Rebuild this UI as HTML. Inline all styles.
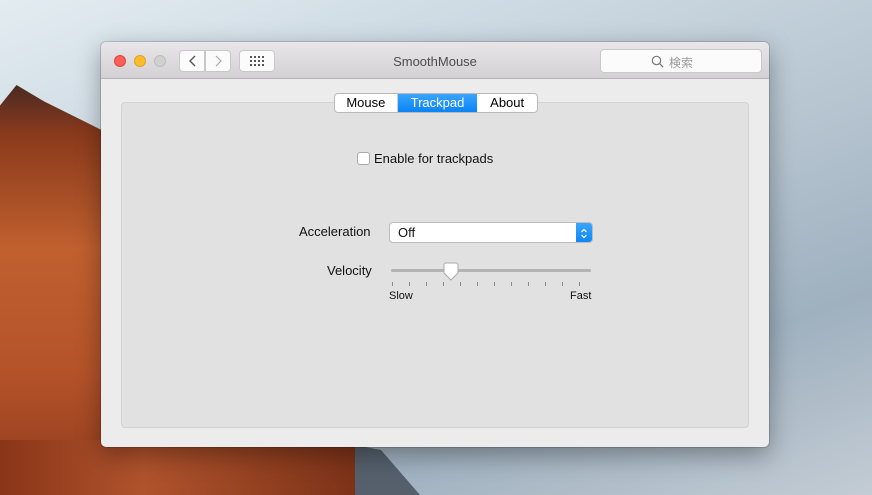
<!DOCTYPE html>
<html><head><meta charset="utf-8"><style>
*{margin:0;padding:0;box-sizing:border-box}
html,body{width:872px;height:495px;overflow:hidden}
body{position:relative;font-family:"Liberation Sans","Noto Sans CJK JP",sans-serif;font-size:13px;
background:linear-gradient(160deg,#e3ecf1 0%,#ccd9e2 25%,#b2c1cd 55%,#9fb0bf 75%,#c3ccd4 100%)}
.a{position:absolute}
.cliff{left:0;top:85px;width:110px;height:410px;background:linear-gradient(180deg,#4a2a22 0%,#8a3a1c 12%,#c0602f 40%,#b4532a 70%,#8f3a1b 100%);clip-path:polygon(0 5%,15% 0,40% 4%,70% 8%,100% 12%,100% 100%,0 100%)}
.cliff2{left:0;top:440px;width:358px;height:55px;background:linear-gradient(90deg,#8a3518,#b0532c 40%,#7c3218 100%)}
.rock{left:355px;top:445px;width:65px;height:50px;background:#55606c;clip-path:polygon(0 0,40% 10%,100% 100%,0 100%)}
.win{left:101px;top:42px;width:668px;height:405px;background:#ececec;border-radius:5px;box-shadow:0 8px 25px rgba(0,0,0,.35),0 0 0 1px rgba(0,0,0,.15);overflow:hidden}
.tb{left:0;top:0;width:668px;height:37px;background:linear-gradient(#e8e6e8,#d3d1d3);border-bottom:1px solid #b5b3b5}
.dot{top:13px;width:12px;height:12px;border-radius:50%}
.btn{background:#fbfbfb;border:1px solid #c8c8c8;border-radius:4px}
.box{left:20px;top:60px;width:628px;height:326px;background:#e1e1e1;border:1px solid #d3d3d3;border-radius:4px}
.tabs{left:233px;top:51px;height:20px;width:204px;border:1px solid #b9b9b9;border-radius:4px;background:#fff;display:flex;overflow:hidden;font-size:13px;line-height:18px}
.tabs div{text-align:center}
</style></head><body>
<div class="a cliff"></div><div class="a cliff2"></div><div class="a rock"></div>
<div class="a win">
 <div class="a tb"></div>
 <div class="a dot" style="left:13px;background:#fc5f57;border:1px solid #e0443e"></div>
 <div class="a dot" style="left:33px;background:#fdbc2e;border:1px solid #dea123"></div>
 <div class="a dot" style="left:53px;background:#d0d0d0;border:1px solid #bdbdbd"></div>
 <div class="a btn" style="left:78px;top:8px;width:26px;height:22px;border-radius:4px 0 0 4px"></div>
 <div class="a btn" style="left:104px;top:8px;width:26px;height:22px;border-radius:0 4px 4px 0"></div>
 <svg class="a" style="left:78px;top:8px" width="52" height="22"><path d="M16 6l-5 5 5 5" fill="none" stroke="#555" stroke-width="1.4"/><path d="M37 6l5 5-5 5" fill="none" stroke="#aaa" stroke-width="1.2"/></svg>
 <div class="a btn" style="left:138px;top:8px;width:36px;height:22px"></div>
 <svg class="a" style="left:148px;top:13px" width="16" height="12"><g fill="#555"><rect x="1" y="1" width="2" height="2"/><rect x="5" y="1" width="2" height="2"/><rect x="9" y="1" width="2" height="2"/><rect x="13" y="1" width="2" height="2"/><rect x="1" y="5" width="2" height="2"/><rect x="5" y="5" width="2" height="2"/><rect x="9" y="5" width="2" height="2"/><rect x="13" y="5" width="2" height="2"/><rect x="1" y="9" width="2" height="2"/><rect x="5" y="9" width="2" height="2"/><rect x="9" y="9" width="2" height="2"/><rect x="13" y="9" width="2" height="2"/></g></svg>
 <div class="a" style="left:0;width:668px;top:12px;text-align:center;color:#4d4d4d;font-size:13px">SmoothMouse</div>
 <div class="a btn" style="left:499px;top:7px;width:162px;height:24px"></div>
 <svg class="a" style="left:550px;top:13px" width="14" height="14"><circle cx="5.5" cy="5.5" r="4.2" fill="none" stroke="#777" stroke-width="1.2"/><path d="M8.6 8.6l3.5 3.5" stroke="#777" stroke-width="1.3"/></svg>
 <div class="a" style="left:568px;top:12px;color:#999;font-size:12px">検索</div>
 <div class="a box"></div>
 <div class="a tabs"><div style="width:63px;border-right:1px solid #ccc">Mouse</div><div style="width:80px;background:linear-gradient(#3ba4fd,#0a84f5);color:#fff">Trackpad</div><div style="width:60px">About</div></div>
 <div class="a" style="left:256px;top:110px;width:13px;height:13px;background:#fff;border:1px solid #aaa;border-radius:3px"></div>
 <div class="a" style="left:273px;top:109px;color:#111">Enable for trackpads</div>
 <div class="a" style="left:198px;top:182px;color:#111">Acceleration</div>
 <div class="a" style="left:288px;top:180px;width:204px;height:21px;background:#fff;border:1px solid #bcbcbc;border-radius:4px;overflow:hidden"><span class="a" style="left:8px;top:2px;color:#111">Off</span><div class="a" style="right:0;top:0;width:16px;height:21px;background:linear-gradient(#3ba4fd,#0a84f5)"></div><svg class="a" style="right:3px;top:4px" width="10" height="13"><path d="M2.5 5l2.5-2.5 2.5 2.5M2.5 8l2.5 2.5 2.5-2.5" fill="none" stroke="#fff" stroke-width="1.2"/></svg></div>
 <div class="a" style="left:226px;top:221px;color:#111">Velocity</div>
 <div class="a" style="left:290px;top:227px;width:200px;height:3px;background:#b3b3b3;border-radius:2px"></div>
 <svg class="a" style="left:288px;top:220px" width="206" height="30"><g stroke="#888" stroke-width="1"><path d="M3.5 20v4M20.5 20v4M37.5 20v4M54.5 20v4M71.5 20v4M88.5 20v4M105.5 20v4M122.5 20v4M139.5 20v4M156.5 20v4M173.5 20v4M190.5 20v4"/></g><path d="M55 3a2 2 0 0 1 2-2h10a2 2 0 0 1 2 2v8l-7 7-7-7z" fill="#fff" stroke="#aaa" stroke-width="1"/></svg>
 <div class="a" style="left:288px;top:248px;font-size:11px;color:#111">Slow</div>
 <div class="a" style="left:469px;top:248px;font-size:11px;color:#111">Fast</div>
</div>
</body></html>
